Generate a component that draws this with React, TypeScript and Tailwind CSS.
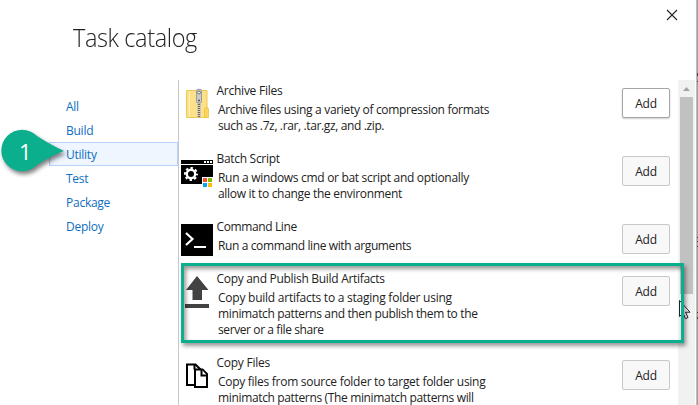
import type { ReactNode } from "react";

type Task = { title: string; titleClass: string; lines: [string, string][]; icon: ReactNode; height: string; active?: boolean };

const ZipIcon = () => (
  <svg width="32" height="32" viewBox="0 0 32 32">
    <path d="M5.5 2.5h20.500v27H5.500z" fill="#fde08a" stroke="#efc94c" />
    <path d="M8.500 3v26" stroke="#fff0b8" />
    <path d="M23.500 29.500V21l2-2.500 2 2.500v8.500z" fill="#fbd45f" stroke="#ecc043" strokeWidth=".8" />
    <path d="M18 14v15.500" stroke="#d9d3be" strokeWidth="4" />
    <path d="M18 14v15.500" stroke="#6b6658" strokeWidth="2.400" strokeDasharray="1 1" />
    <path d="M15.500 2.500q0-1.200 1.500-1.200h2q1.500 0 1.500 1.200v11q0 1.500-1.500 1.500h-2q-1.500 0-1.500-1.500z" fill="#c9cbcd" stroke="#8b8e90" strokeWidth=".8" />
    <circle cx="18" cy="4.500" r="1.500" fill="#e8e8e8" stroke="#77797b" />
    <circle cx="18" cy="12.500" r=".9" fill="#444" />
  </svg>
);

const BatchIcon = () => (
  <svg width="32" height="32" viewBox="0 0 32 32">
    <path d="M0 4h32v4H0zM0 9h32v19H0z" fill="#000" />
    <path d="M23 5h2v2h-2zM26 5h2v2h-2zM29 5h2v2h-2z" fill="#fff" />
    <circle cx="10" cy="18" r="4.200" fill="none" stroke="#fff" strokeWidth="2.400" />
    <circle cx="10" cy="18" r="6" fill="none" stroke="#fff" strokeWidth="2" strokeDasharray="2.500 2.212" strokeDashoffset="1.250" />
    <path d="M21 21h11v11H21z" fill="#fff" />
    <path d="M22 22h4v4h-4z" fill="#f35325" />
    <path d="M27 22h4v4h-4z" fill="#81bc06" />
    <path d="M22 27h4v4h-4z" fill="#05a6f0" />
    <path d="M27 27h4v4h-4z" fill="#ffba08" />
  </svg>
);

const CommandIcon = () => (
  <svg width="32" height="32" viewBox="0 0 32 32">
    <path d="M0 0h32v32H0z" fill="#000" />
    <path d="M5 9l6.500 6L5 21" fill="none" stroke="#fff" strokeWidth="2.200" />
    <path d="M13 22h12v2H13z" fill="#fff" />
  </svg>
);

const PublishIcon = () => (
  <svg width="32" height="32" viewBox="0 0 32 32">
    <path d="M16 0l11.500 14H21v10h-9.500V14H5zM4 28h24v4H4z" fill="#424242" />
  </svg>
);

const CopyIcon = () => (
  <svg width="32" height="32" viewBox="0 0 32 32" fill="#fff" stroke="#000" strokeWidth="2">
    <path d="M6 4.500h8.500l4.500 4.500V25H6z" />
    <path d="M13.500 4.500v5" />
    <path d="M14 9.500h7.500l4.500 4.500v13H14z" />
    <path d="M20.500 9.500v6H26" />
  </svg>
);

const tasks: Task[] = [
  {
    title: "Archive Files", titleClass: "tracking-[-0.25px]", height: "h-[68px]", icon: <ZipIcon />, active: true,
    lines: [["Archive files using a variety of compression formats", "tracking-[-0.31px]"], ["such as .7z, .rar, .tar.gz, and .zip.", "tracking-[-0.37px]"]],
  },
  {
    title: "Batch Script", titleClass: "tracking-[-0.3px]", height: "h-[68px]", icon: <BatchIcon />,
    lines: [["Run a windows cmd or bat script and optionally", "tracking-[-0.31px]"], ["allow it to change the environment", "tracking-[-0.31px]"]],
  },
  {
    title: "Command Line", titleClass: "tracking-[-0.38px]", height: "h-[52px]", icon: <CommandIcon />,
    lines: [["Run a command line with arguments", "tracking-[-0.38px]"]],
  },
  {
    title: "Copy and Publish Build Artifacts", titleClass: "tracking-[-0.3px]", height: "h-[84px]", icon: <PublishIcon />,
    lines: [["Copy build artifacts to a staging folder using", "tracking-[-0.24px]"], ["minimatch patterns and then publish them to the", "tracking-[-0.36px]"], ["server or a file share", "tracking-[-0.4px]"]],
  },
  {
    title: "Copy Files", titleClass: "tracking-[-0.25px]", height: "h-[53px]", icon: <CopyIcon />,
    lines: [["Copy files from source folder to target folder using", "tracking-[-0.28px]"], ["minimatch patterns (The minimatch patterns will", "tracking-[-0.35px]"]],
  },
];

const categories = ["All", "Build", "Utility", "Test", "Package", "Deploy"];

export default function App() {
  return (
    <div className="relative flex h-[405px] w-[698px] overflow-hidden bg-white font-['Open_Sans','Noto_Sans',sans-serif] text-[12px] text-[#222]">
      <div className="flex w-[696px] flex-col pr-px">
        <header className="flex h-20 shrink-0 items-start justify-between pr-[17px] pl-[73px]">
          <h1 className="origin-left scale-x-[0.94] pt-[19px] text-[25px] leading-9 font-light tracking-[-0.4px] text-[#222]">Task catalog</h1>
          <svg className="mt-[9px]" width="12" height="12" viewBox="0 0 12 12" stroke="#222" strokeWidth="1.100">
            <path d="M1 1l10 10M11 1L1 11" />
          </svg>
        </header>
        <div className="flex min-h-0 flex-1">
          <nav className="w-[178px] shrink-0 pt-[14px] pl-[49px]">
            {categories.map((c) => (
              <div key={c} className={`flex h-6 items-center border pt-px pl-4 tracking-[-0.25px] text-[#106ebe] ${c === "Utility" ? "border-[#b5d3f8] bg-[#eff6ff]" : "border-transparent"}`}>
                {c}
              </div>
            ))}
          </nav>
          <main className="flex-1 border-l border-[#c8c8c8]">
            {tasks.map((t) => (
              <section key={t.title} className={`flex ${t.height}`}>
                <div className="w-[37px] shrink-0 pt-2 pl-[2px]">{t.icon}</div>
                <div className="flex-1 pt-[3px] whitespace-nowrap">
                  <div className={`mb-[3px] pl-[0.5px] leading-4 ${t.titleClass}`}>{t.title}</div>
                  {t.lines.map(([text, spacing]) => (
                    <div key={text} className="pl-[2px] leading-4"><span className={spacing}>{text}</span></div>
                  ))}
                </div>
                <button className={`mt-2 mr-2 h-[30px] w-12 shrink-0 rounded-[2px] border pt-[2px] text-[12px] tracking-[-0.2px] ${t.active ? "border-[#a6a6a6] bg-white shadow-[0_1px_2px_rgba(0,0,0,0.2)]" : "border-[#c8c8c8] bg-[#f8f8f8]"}`}>
                  Add
                </button>
              </section>
            ))}
          </main>
          <div className="flex w-[17px] flex-col items-center bg-[#f1f1f1]">
            <svg width="17" height="17" viewBox="0 0 17 17"><path d="M5 11l3.500-4 3.500 4z" fill="#a3a3a3" /></svg>
            <div className="h-[197px] w-[13px] bg-[#c1c1c1]" />
          </div>
        </div>
      </div>
      <svg width="2" height="405" viewBox="0 0 2 405">
        <path d="M0 0h2v405H0z" fill="#a0a0a0" />
        <path d="M0 0h.6v405H0z" fill="#d0d0d0" />
        <path d="M1 73h1v3H1zM1 81h1v1H1zM1 237h1v1H1zM1 241h1v1H1zM1 246h1v1H1zM1 312h1v1H1zM1 317h1v2H1z" fill="#404040" />
      </svg>

      <svg className="absolute top-[299px] left-[678px]" width="14" height="22" viewBox="0 0 14 22">
        <path d="M1.500 1.500v16l3.500-3.300 2.500 5.500 2.500-1.200-2.500-5.300h4.500z" fill="#fff" stroke="#222238" />
      </svg>

      <div className="absolute top-[263px] left-[181px] h-20 w-[503px] border-[3px] border-[#0bae8d] shadow-[2px_3px_4px_rgba(0,0,0,0.4),inset_2px_3px_4px_rgba(0,0,0,0.4)]" />

      <div className="absolute top-[124px] left-0 h-[58px] w-[72px]">
        <svg className="drop-shadow-[2px_3px_2px_rgba(0,0,0,0.5)]" width="72" height="58" viewBox="0 0 72 58">
          <path d="M64 27C53 22 45 17 37 12A20.800 20.800 0 1 0 37 41C45 36 53 31 64 27Z" fill="#0bae8d" />
        </svg>
        <span className="absolute top-[13px] left-[19px] text-[22px] leading-7 text-white">1</span>
      </div>
    </div>
  );
}
